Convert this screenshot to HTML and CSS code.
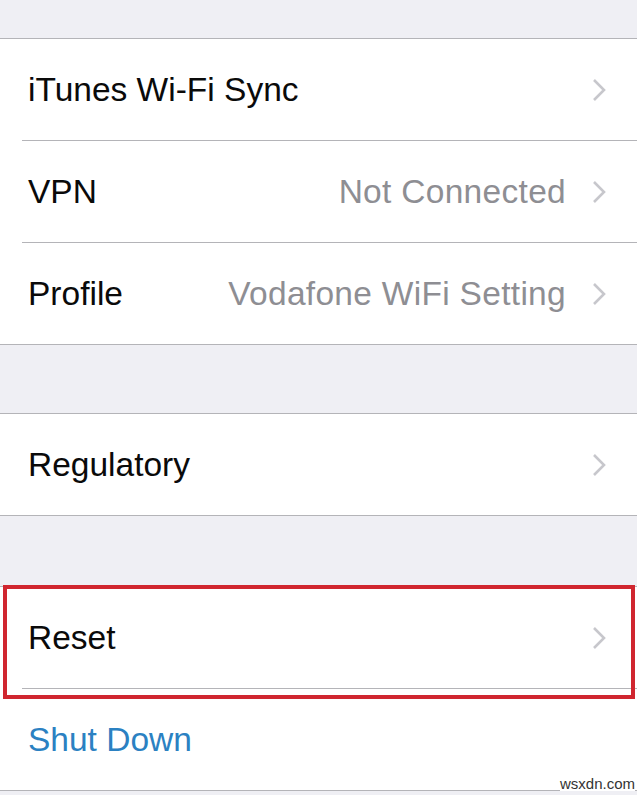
FILE: index.html
```html
<!DOCTYPE html>
<html lang="en">
<head>
    <meta charset="UTF-8">
    <meta name="viewport" content="width=device-width, initial-scale=1.0">
    <title>General</title>
    <link rel="stylesheet" href="styles.css">
</head>
<body>
    <div class="spacer top"></div>

    <div class="group">
        <div class="row">
            <span class="label">iTunes Wi-Fi Sync</span>
            <svg class="chevron" viewBox="0 0 14 24"><polyline points="2,2 12,12 2,22"/></svg>
        </div>
        <div class="row">
            <span class="label">VPN</span>
            <span class="value">Not Connected</span>
            <svg class="chevron" viewBox="0 0 14 24"><polyline points="2,2 12,12 2,22"/></svg>
        </div>
        <div class="row">
            <span class="label">Profile</span>
            <span class="value">Vodafone WiFi Setting</span>
            <svg class="chevron" viewBox="0 0 14 24"><polyline points="2,2 12,12 2,22"/></svg>
        </div>
    </div>

    <div class="spacer short"></div>

    <div class="group">
        <div class="row">
            <span class="label">Regulatory</span>
            <svg class="chevron" viewBox="0 0 14 24"><polyline points="2,2 12,12 2,22"/></svg>
        </div>
    </div>

    <div class="spacer"></div>

    <div class="group last">
        <div class="highlight"></div>
        <div class="row">
            <span class="label">Reset</span>
            <svg class="chevron" viewBox="0 0 14 24"><polyline points="2,2 12,12 2,22"/></svg>
        </div>
        <div class="row">
            <span class="label action">Shut Down</span>
        </div>
        <span class="watermark">wsxdn.com</span>
    </div>
</body>
</html>
```

FILE: styles.css
```css
body {
    margin: 0;
    background-color: #efeff4;
    font-family: "Liberation Sans", Arial, sans-serif;
    overflow: hidden;
}
.spacer {
    height: 70px;
}
.spacer.short {
    height: 68px;
}
.spacer.top {
    height: 38px;
}
.group {
    position: relative;
    background: white;
    border-top: 1px solid #b4b4b8;
    border-bottom: 1px solid #b4b4b8;
}
.row {
    display: flex;
    align-items: center;
    height: 101px;
    padding: 0 31px 0 28px;
    position: relative;
}
.row + .row {
    border-top: 1px solid #b4b4b8;
    margin-left: 22px;
    padding-left: 6px;
}
.label {
    flex: 1;
    font-size: 33.5px;
    color: #0a0a0a;
}
.label.action {
    color: #2b81c2;
}
.value {
    font-size: 33.5px;
    color: #8e8e93;
    margin-right: 26px;
    letter-spacing: 0.3px;
}
.chevron {
    width: 14px;
    height: 24px;
    fill: none;
    stroke: #c7c7cc;
    stroke-width: 2.6;
}
.highlight {
    position: absolute;
    top: -2px;
    left: 3px;
    right: 2px;
    height: 106px;
    border: 4px solid #d0262f;
    z-index: 1;
}
.watermark {
    position: absolute;
    right: 2px;
    bottom: -2px;
    font-size: 15px;
    color: #333;
    background: white;
}
```
